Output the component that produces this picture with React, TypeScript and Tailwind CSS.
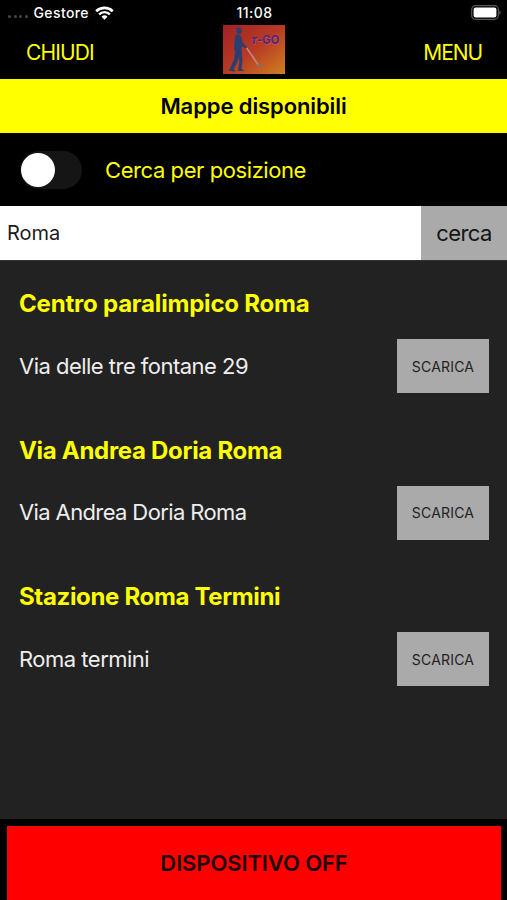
import { useState } from "react";

type MapRow = {
  title: string;
  titleClass: string;
  address: string;
  addressClass: string;
};

const maps: MapRow[] = [
  {
    title: "Centro paralimpico Roma",
    titleClass: "tracking-[-0.2px]",
    address: "Via delle tre fontane 29",
    addressClass: "tracking-[-0.52px]",
  },
  {
    title: "Via Andrea Doria Roma",
    titleClass: "tracking-[-0.3px]",
    address: "Via Andrea Doria Roma",
    addressClass: "tracking-[-0.62px]",
  },
  {
    title: "Stazione Roma Termini",
    titleClass: "tracking-[-0.34px]",
    address: "Roma termini",
    addressClass: "tracking-[-0.5px]",
  },
];

function WifiIcon() {
  return (
    <svg width="19" height="14" viewBox="0 0 19 14" fill="none">
      <path d="M1.2 5.2a12 12 0 0 1 16.6 0" stroke="#fff" strokeWidth="2.6" />
      <path d="M4.1 8.3a7.8 7.8 0 0 1 10.8 0" stroke="#fff" strokeWidth="2.4" />
      <path d="M9.5 13.7 6.5 10.7a4.3 4.3 0 0 1 6 0Z" fill="#fff" />
    </svg>
  );
}

function BatteryIcon() {
  return (
    <svg width="30" height="15" viewBox="0 0 30 15" fill="none">
      <rect x="0.7" y="0.7" width="26.6" height="13.6" rx="3.8" stroke="#59595c" strokeWidth="1.2" />
      <rect x="2.6" y="2.6" width="22.8" height="9.8" rx="2" fill="#fff" />
      <path d="M28.4 5.2c1.8.8 1.8 3.8 0 4.6Z" fill="#59595c" />
    </svg>
  );
}

function Logo() {
  return (
    <svg width="62" height="49" viewBox="0 0 62 49">
      <defs>
        <linearGradient id="sunset" x1="0" y1="0" x2="1" y2="1">
          <stop offset="0" stopColor="#a02226" />
          <stop offset="0.5" stopColor="#b83a24" />
          <stop offset="1" stopColor="#cf8020" />
        </linearGradient>
      </defs>
      <rect width="62" height="49" fill="url(#sunset)" />
      <g fill="#2a3f70">
        <path d="M13.2 5.2c0-1.7 1-2.7 2.6-2.7s2.6 1 2.7 2.5l.8.9-.9.3c0 2-.8 3-2.4 3-1.7 0-2.7-1.3-2.8-4Z" />
        <path d="M13.5 9.5c-1.4 1-1.9 3-1.8 5.5l-.7 9 1.2 3-1.4 8-3.8 8-1.2 2.5 6 1.2.6-1.4-1.8-.9 3.7-7.2 1.2-5.5 1 5.5-1.5 7.2.2 1.7h5.3l.2-1.2-2.3-1 1.1-8-.9-10.5.1-4.5 4.7 3.1 1.2-1.5-4.9-4.7c-.7-4.5-1.6-7-3.2-8.3Z" />
      </g>
      <path d="m23.5 22.8 12 17.3" stroke="#b98a86" strokeWidth="1.6" />
      <ellipse cx="37" cy="40.5" rx="2.6" ry="1.8" fill="#8a6a66" />
      <g className="font-['Inter',sans-serif] text-[12px] font-bold">
        <text x="29" y="20" textLength="28" lengthAdjust="spacingAndGlyphs" fill="#d0487c">
          <tspan fontStyle="italic">т</tspan>-GO
        </text>
        <text x="28.3" y="19.2" textLength="28" lengthAdjust="spacingAndGlyphs" fill="#4a2c6c">
          <tspan fontStyle="italic">т</tspan>-GO
        </text>
      </g>
    </svg>
  );
}

function StatusBar() {
  return (
    <div className="grid h-[25px] grid-cols-3 items-center pl-2 pr-[6px] text-[14px] font-medium text-white">
      <div className="flex items-center">
        <div className="mt-[8px] flex gap-[2.5px]">
          {[0, 1, 2, 3].map((dot) => (
            <span key={dot} className="h-[3px] w-[3px] rounded-full bg-[#48484a]" />
          ))}
        </div>
        <span className="mb-px ml-[6px] mr-[6px] tracking-[0.4px]">Gestore</span>
        <WifiIcon />
      </div>
      <span className="mb-px text-center font-medium tracking-[0.5px]">11:08</span>
      <div className="flex justify-end">
        <BatteryIcon />
      </div>
    </div>
  );
}

export default function App() {
  const [nearby, setNearby] = useState(false);
  const [query, setQuery] = useState("Roma");

  return (
    <div className="flex h-[900px] w-[507px] flex-col overflow-hidden bg-black font-['Inter',sans-serif]">
      <StatusBar />

      <header className="flex h-[54px] items-start justify-between pl-[26px] pr-[25px] text-[21px] text-[#ffff00]">
        <button type="button" className="mt-[12px] w-[80px] text-left tracking-[-0.85px]">
          CHIUDI
        </button>
        <Logo />
        <button type="button" className="mt-[12px] w-[80px] text-right tracking-[-1.1px]">
          MENU
        </button>
      </header>

      <h1 className="flex h-[54px] shrink-0 items-center justify-center bg-[#ffff00] text-[22px] font-semibold tracking-[-0.1px] text-black">
        Mappe disponibili
      </h1>

      <div className="flex h-[73px] shrink-0 items-center pl-5">
        <button
          type="button"
          role="switch"
          aria-checked={nearby}
          onClick={() => setNearby(!nearby)}
          className={`flex h-[38px] w-[62px] items-center rounded-full bg-[#151515] px-[1px] ${
            nearby ? "justify-end" : "justify-start"
          }`}
        >
          <span className="h-[34px] w-[34px] rounded-full bg-white" />
        </button>
        <span className="ml-[23px] mt-px text-[22px] tracking-[-0.42px] text-[#ffff00]">Cerca per posizione</span>
      </div>

      <div className="flex h-[54px] shrink-0">
        <input
          value={query}
          onChange={(e) => setQuery(e.target.value)}
          className="w-[421px] bg-white pl-[7px] text-[20px] text-[#1c1c1c] outline-none"
        />
        <button type="button" className="flex-1 bg-[#aaaaaa] text-[22px] tracking-[-0.6px] text-[#141414]">
          cerca
        </button>
      </div>

      <main className="flex-1 border-t border-[#2f2f2f] bg-[#222222]">
        {maps.map((row) => (
          <section key={row.title} className="h-[146.67px] pl-[19px] pr-[18px] pt-[27px]">
            <h2 className={`h-[51px] text-[24px] leading-[32px] font-bold text-[#ffff00] ${row.titleClass}`}>
              {row.title}
            </h2>
            <div className="flex items-center justify-between">
              <p className={`text-[22px] text-[#eeeeee] ${row.addressClass}`}>{row.address}</p>
              <button
                type="button"
                className="h-[54px] w-[92px] bg-[#aaaaaa] text-[14px] tracking-[0.2px] text-[#222222]"
              >
                SCARICA
              </button>
            </div>
          </section>
        ))}
      </main>

      <footer className="h-[81px] shrink-0 bg-black px-[7px] pt-[7px]">
        <button
          type="button"
          className="h-full w-[494px] bg-[#ff0000] text-[22px] font-semibold tracking-[-0.1px] text-[#1a0000]"
        >
          DISPOSITIVO OFF
        </button>
      </footer>
    </div>
  );
}
